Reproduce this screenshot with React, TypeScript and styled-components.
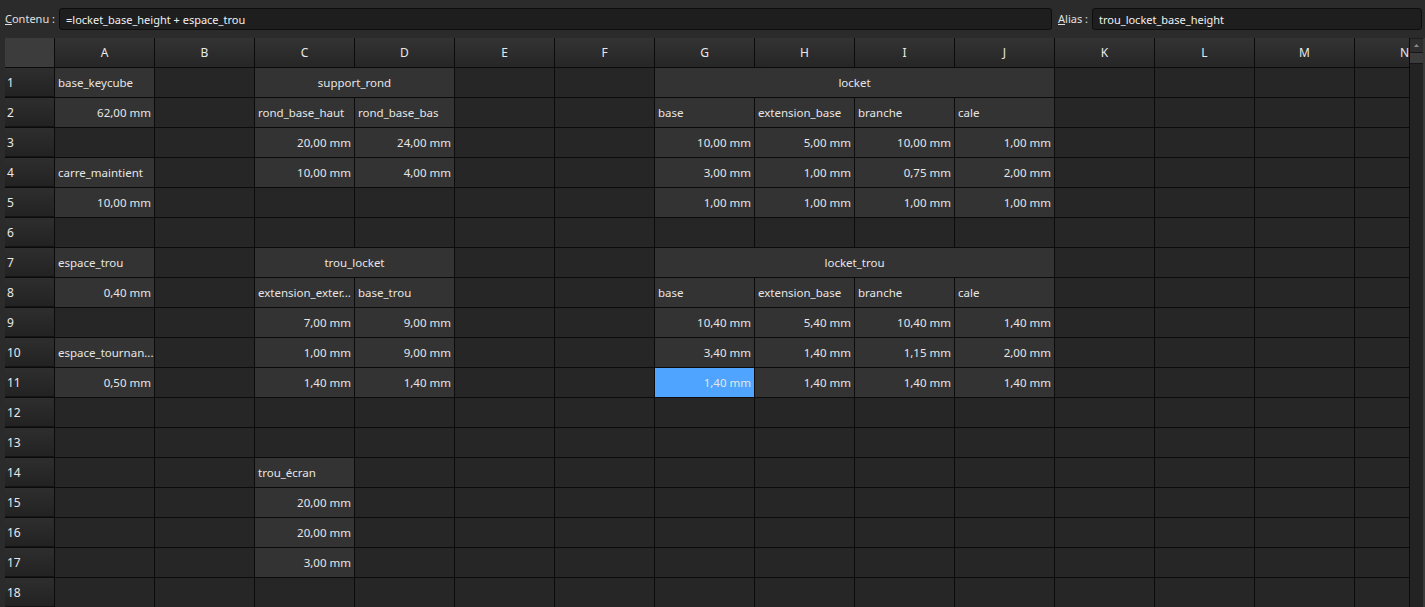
import React from "react";
import styled, { createGlobalStyle, css } from "styled-components";

const Global = createGlobalStyle`
  html, body { margin: 0; padding: 0; background: #2b2b2b; }
  body { font-family: "Segoe UI", "Noto Sans", "Open Sans", sans-serif; color: #e4e4e4; overflow: hidden; }
`;

const Page = styled.div`
  width: 1425px;
  height: 607px;
  display: flex;
  flex-direction: column;
  background: #2b2b2b;
  overflow: hidden;
`;

const Toolbar = styled.div`
  height: 38px;
  display: flex;
  align-items: center;
  padding: 0 3px 0 5px;
  box-sizing: border-box;
  gap: 4px;
`;

const Label = styled.label<{ $gapLeft?: number }>`
  font-size: 11px;
  color: #e0e0e0;
  white-space: nowrap;
  padding-bottom: 1px;
  margin-left: ${(p) => p.$gapLeft ?? 0}px;
`;

const Field = styled.div<{ $grow?: boolean; $width?: number }>`
  height: 22px;
  box-sizing: border-box;
  background: #1e1e1e;
  border: 1px solid #0e0e0e;
  border-radius: 3px;
  display: flex;
  align-items: center;
  padding-left: 6px;
  font-size: 11px;
  color: #f0f0f0;
  ${(p) => (p.$grow ? css`flex: 1;` : css`width: ${p.$width}px;`)}
`;

const Body = styled.div`
  flex: 1;
  display: flex;
  padding-left: 5px;
  overflow: hidden;
`;

const Viewport = styled.div`
  flex: 1;
  overflow: hidden;
  background: #0b0b0b;
`;

const Grid = styled.div`
  display: grid;
  grid-template-columns: 49px repeat(14, 99px);
  grid-auto-rows: 29px;
  grid-template-rows: 29px;
  gap: 1px;
  width: max-content;
  background: #0b0b0b;
`;

const Corner = styled.div`
  background: #3c3c3c;
`;

const ColHead = styled.div`
  background: linear-gradient(#333333, #262626);
  display: flex;
  align-items: center;
  justify-content: center;
  font-size: 12px;
  color: #e8e8e8;
`;

const RowHead = styled.div`
  background: linear-gradient(#2e2e2e, #222222);
  display: flex;
  align-items: center;
  padding-left: 2px;
  font-size: 12px;
  color: #e8e8e8;
  box-shadow: inset 0 -1px 0 #141414;
`;

const Cell = styled.div<{ $filled?: boolean; $align?: "left" | "right" | "center"; $span?: number; $selected?: boolean }>`
  background: ${(p) => (p.$selected ? "#4ea4fe" : p.$filled ? "#333333" : "#262626")};
  grid-column: span ${(p) => p.$span ?? 1};
  font-size: 11.5px;
  line-height: 29px;
  padding: 0 3px 0 3px;
  text-align: ${(p) => p.$align ?? "left"};
  white-space: nowrap;
  overflow: hidden;
  color: #e6e6e6;
`;

const Scrollbar = styled.div`
  width: 16px;
  display: flex;
  flex-direction: column;
  background: #1d1d1d;
  border-left: 1px solid #0b0b0b;
  box-sizing: border-box;
  border-right: 2px solid #3a3a3a;
`;

const ScrollButton = styled.div`
  height: 13px;
  margin-top: 1px;
  background: #2e2e2e;
  display: flex;
  align-items: center;
  justify-content: center;
  border-bottom: 1px solid #161616;
`;

const Thumb = styled.div`
  height: 10px;
  background: #3b3b3b;
  border-bottom: 1px solid #161616;
`;

const Track = styled.div`
  flex: 1;
  background: #232323;
`;

type C = { t?: string; a?: "left" | "right" | "center"; f?: boolean; s?: number; sel?: boolean } | null;

const L = (t: string): C => ({ t, a: "left", f: true });
const R = (t: string): C => ({ t, a: "right", f: true });
const M = (t: string, s: number): C => ({ t, a: "center", f: true, s });
const E: C = null;

const cols = "ABCDEFGHIJKLMN".split("");

const rows: C[][] = [
  [L("base_keycube"), E, M("support_rond", 2), E, E, M("locket", 4), E, E, E, E],
  [R("62,00 mm"), E, L("rond_base_haut"), L("rond_base_bas"), E, E, L("base"), L("extension_base"), L("branche"), L("cale"), E, E, E, E],
  [E, E, R("20,00 mm"), R("24,00 mm"), E, E, R("10,00 mm"), R("5,00 mm"), R("10,00 mm"), R("1,00 mm"), E, E, E, E],
  [L("carre_maintient"), E, R("10,00 mm"), R("4,00 mm"), E, E, R("3,00 mm"), R("1,00 mm"), R("0,75 mm"), R("2,00 mm"), E, E, E, E],
  [R("10,00 mm"), E, E, E, E, E, R("1,00 mm"), R("1,00 mm"), R("1,00 mm"), R("1,00 mm"), E, E, E, E],
  [E, E, E, E, E, E, E, E, E, E, E, E, E, E],
  [L("espace_trou"), E, M("trou_locket", 2), E, E, M("locket_trou", 4), E, E, E, E],
  [R("0,40 mm"), E, L("extension_exter..."), L("base_trou"), E, E, L("base"), L("extension_base"), L("branche"), L("cale"), E, E, E, E],
  [E, E, R("7,00 mm"), R("9,00 mm"), E, E, R("10,40 mm"), R("5,40 mm"), R("10,40 mm"), R("1,40 mm"), E, E, E, E],
  [L("espace_tournan..."), E, R("1,00 mm"), R("9,00 mm"), E, E, R("3,40 mm"), R("1,40 mm"), R("1,15 mm"), R("2,00 mm"), E, E, E, E],
  [R("0,50 mm"), E, R("1,40 mm"), R("1,40 mm"), E, E, { t: "1,40 mm", a: "right", sel: true }, R("1,40 mm"), R("1,40 mm"), R("1,40 mm"), E, E, E, E],
  [E, E, E, E, E, E, E, E, E, E, E, E, E, E],
  [E, E, E, E, E, E, E, E, E, E, E, E, E, E],
  [E, E, L("trou_écran"), E, E, E, E, E, E, E, E, E, E, E],
  [E, E, R("20,00 mm"), E, E, E, E, E, E, E, E, E, E, E],
  [E, E, R("20,00 mm"), E, E, E, E, E, E, E, E, E, E, E],
  [E, E, R("3,00 mm"), E, E, E, E, E, E, E, E, E, E, E],
  [E, E, E, E, E, E, E, E, E, E, E, E, E, E],
];

export default function App() {
  return (
    <Page>
      <Global />
      <Toolbar>
        <Label>
          <u>C</u>ontenu :
        </Label>
        <Field $grow>=locket_base_height + espace_trou</Field>
        <Label $gapLeft={2}>
          <u>A</u>lias :
        </Label>
        <Field $width={330}>trou_locket_base_height</Field>
      </Toolbar>
      <Body>
        <Viewport>
          <Grid>
            <Corner />
            {cols.map((c) => (
              <ColHead key={c}>{c}</ColHead>
            ))}
            {rows.map((r, i) => {
              let used = 0;
              const cells: React.ReactNode[] = [];
              r.forEach((c, j) => {
                if (used >= 14) return;
                const span = c?.s ?? 1;
                used += span;
                cells.push(
                  <Cell
                    key={j}
                    $filled={c?.f}
                    $align={c?.a}
                    $span={span}
                    $selected={c?.sel}
                  >
                    {c?.t ?? ""}
                  </Cell>
                );
              });
              while (used < 14) {
                cells.push(<Cell key={`e${used}`} />);
                used++;
              }
              return (
                <React.Fragment key={i}>
                  <RowHead>{i + 1}</RowHead>
                  {cells}
                </React.Fragment>
              );
            })}
          </Grid>
        </Viewport>
        <Scrollbar>
          <ScrollButton>
            <svg width="5" height="3" viewBox="0 0 5 3">
              <path d="M0 3 L2.5 0 L5 3 Z" fill="#8a8a8a" />
            </svg>
          </ScrollButton>
          <Thumb />
          <Track />
        </Scrollbar>
      </Body>
    </Page>
  );
}
